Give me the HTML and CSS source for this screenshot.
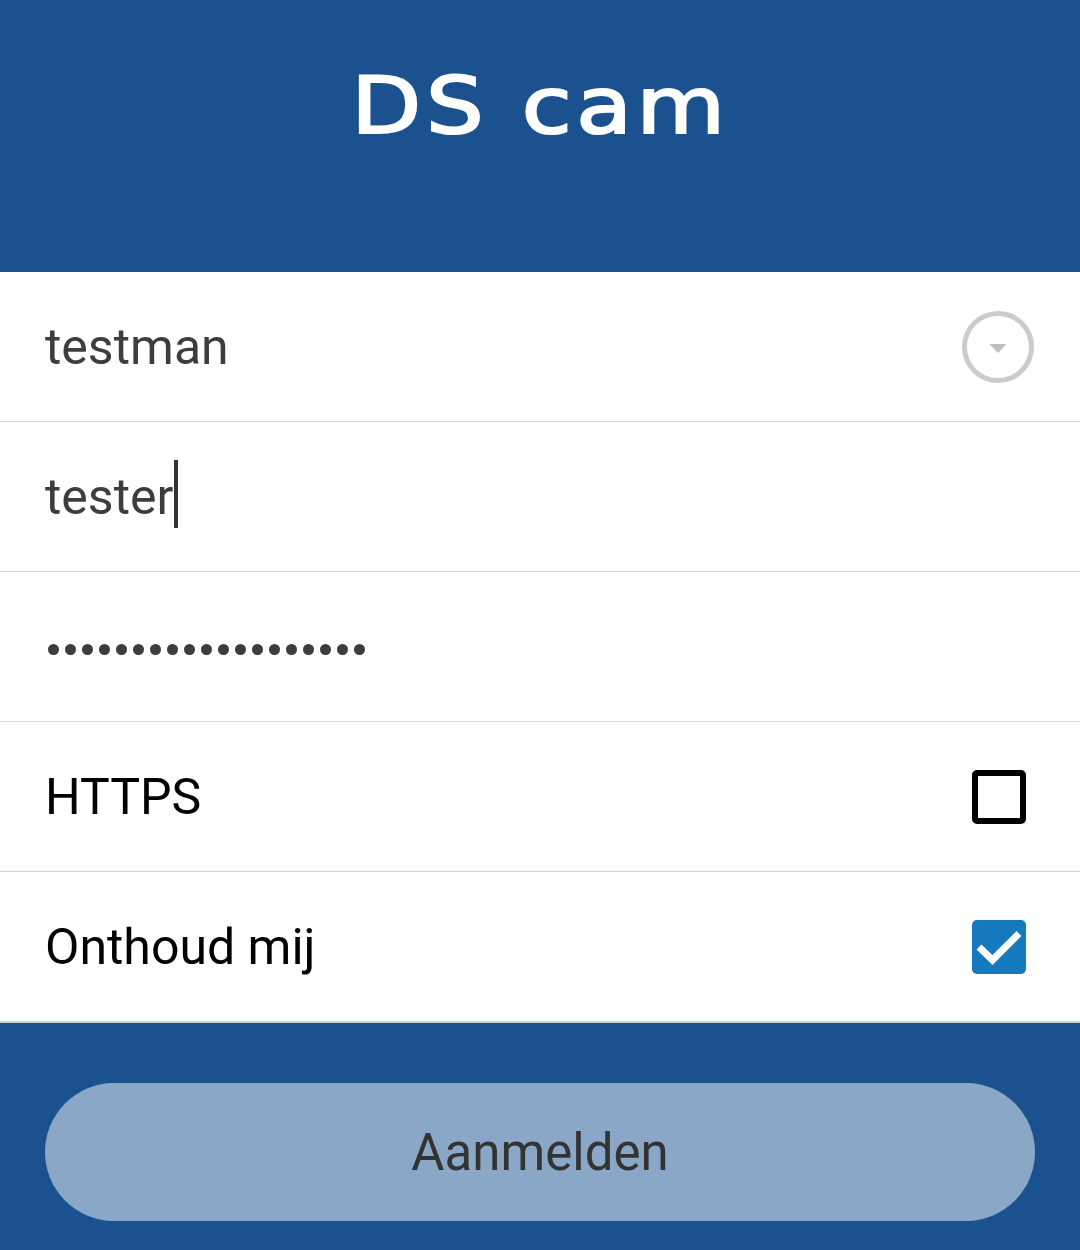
FILE: index.html
```html
<!DOCTYPE html>
<html lang="nl">
<head>
<meta charset="utf-8">
<title>DS cam</title>
<link rel="stylesheet" href="styles.css">
</head>
<body>
<div class="app">
  <header class="header">
    <h1 class="title">DS cam</h1>
  </header>
  <main class="form">
    <div class="row">
      <span class="value">testman</span>
      <svg class="dropdown" width="74" height="74" viewBox="0 0 74 74" aria-hidden="true">
        <circle cx="37" cy="37" r="33.5" fill="none" stroke="#cbcbcb" stroke-width="5"/>
        <path d="M28.5 34 H45.5 L37 43 Z" fill="#bdbdbd"/>
      </svg>
    </div>
    <div class="row">
      <span class="value">teste<span class="caret-wrap">r<span class="caret"></span></span></span>
    </div>
    <div class="row">
      <span class="dots">
        <i></i><i></i><i></i><i></i><i></i><i></i><i></i><i></i><i></i><i></i><i></i><i></i><i></i><i></i><i></i><i></i><i></i><i></i><i></i>
      </span>
    </div>
    <div class="row">
      <span class="label">HTTPS</span>
      <span class="box"></span>
    </div>
    <div class="row">
      <span class="label">Onthoud mij</span>
      <span class="box checked">
        <svg width="54" height="54" viewBox="0 0 54 54" aria-hidden="true">
          <path d="M7 27 L20.5 40 L47 13.5" fill="none" stroke="#fff" stroke-width="7"/>
        </svg>
      </span>
    </div>
  </main>
  <footer class="footer">
    <button class="btn" type="button">Aanmelden</button>
  </footer>
</div>
</body>
</html>
```
FILE: styles.css
```css
html, body {
  margin: 0;
  padding: 0;
}
body {
  width: 1080px;
  height: 1250px;
  overflow: hidden;
  background: #ffffff;
  font-family: Roboto, "Noto Sans", sans-serif;
}
.app {
  display: flex;
  flex-direction: column;
  height: 1250px;
}
.header {
  background: #1b518f;
  height: 272px;
  box-sizing: border-box;
  display: flex;
  justify-content: center;
  padding-top: 56px;
}
.title {
  margin: 0;
  color: #ffffff;
  font-family: "DejaVu Sans", sans-serif;
  font-weight: 400;
  font-size: 79px;
  line-height: 100px;
  letter-spacing: 4px;
  -webkit-text-stroke: 2.2px #ffffff;
  transform: scaleX(1.15);
}
.form {
  display: flex;
  flex-direction: column;
}
.row {
  height: 150px;
  box-sizing: border-box;
  border-bottom: 1px solid #d2d2d2;
  display: flex;
  align-items: center;
  justify-content: space-between;
  padding: 0 45px;
}
.value {
  color: #3d3d3d;
  font-size: 50px;
  line-height: 1;
}
.caret-wrap {
  position: relative;
}
.caret {
  position: absolute;
  right: -4px;
  top: -8px;
  width: 4px;
  height: 68px;
  background: #333333;
}
.dots {
  display: flex;
  gap: 6px;
  padding-left: 3px;
  margin-top: 6px;
}
.dots i {
  display: block;
  width: 11px;
  height: 11px;
  border-radius: 50%;
  background: #3d3d3d;
}
.label {
  color: #000000;
  font-size: 50px;
  line-height: 1;
}
.box {
  width: 54px;
  height: 54px;
  box-sizing: border-box;
  border: 6px solid #000000;
  border-radius: 5px;
  margin-right: 9px;
  display: flex;
  align-items: center;
  justify-content: center;
}
.box.checked {
  border: none;
  background: #1479bf;
}
.footer {
  flex: 1;
  background: #1b518f;
  border-top: 1px solid #c9d3df;
  display: flex;
  padding: 60px 45px 0;
  align-items: flex-start;
}
.btn {
  width: 100%;
  height: 138px;
  border: none;
  border-radius: 69px;
  background: #8ba7c8;
  color: #333333;
  font-family: Roboto, sans-serif;
  font-size: 51px;
  padding: 0;
}
```
